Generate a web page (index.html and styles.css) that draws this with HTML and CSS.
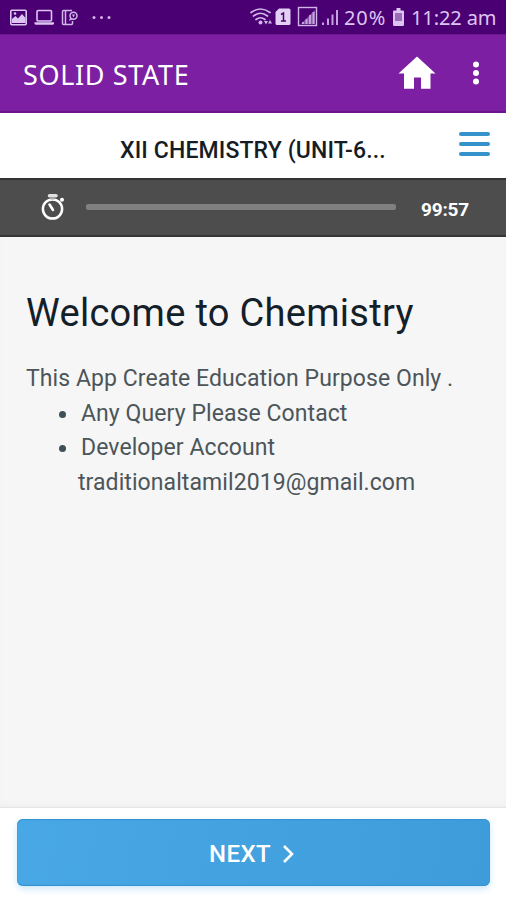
FILE: index.html
```html
<!DOCTYPE html>
<html lang="en">
<head>
<meta charset="utf-8">
<title>Solid State</title>
<link rel="stylesheet" href="styles.css">
</head>
<body>
<div class="status">
  <svg class="status-left" width="130" height="34" viewBox="0 0 130 34">
    <rect x="10.8" y="10.3" width="15.4" height="14.4" rx="1" fill="none" stroke="#dcc5f2" stroke-width="1.6"/>
    <path d="M12 23v-4l3.500-3 2.500 2.500 4-4.500 3.500 4v5z" fill="#dcc5f2"/><circle cx="15" cy="13.500" r="1.300" fill="#dcc5f2"/>
    <rect x="37" y="10.500" width="14.500" height="10.500" rx="1" fill="none" stroke="#dcc5f2" stroke-width="1.600"/>
    <path d="M34.500 22.300h19.500v1q0 1.500-1.500 1.500H36q-1.500 0-1.500-1.500z" fill="#dcc5f2"/>
    <path d="M72 10.500h-8.500q-1 0-1 1v12q0 1 1 1h8q1 0 1-1V21M65.500 10.500v14" fill="none" stroke="#d0b5e8" stroke-width="1.500"/>
    <circle cx="73.500" cy="15.800" r="3.500" fill="none" stroke="#d0b5e8" stroke-width="1.500"/><path d="M72 14.500h3l-1.500 3zM70 18l-1 3 4-2z" fill="#d0b5e8"/>
    <g fill="#d0b5e8"><circle cx="94" cy="17.500" r="1.500"/><circle cx="101.500" cy="17.500" r="1.500"/><circle cx="109" cy="17.500" r="1.500"/></g>
  </svg>
  <div class="status-right">
    <svg width="92" height="34" viewBox="248 0 92 34">
      <g fill="none" stroke="#d0b5e8" stroke-width="1.700" stroke-linecap="round"><path d="M251 12.500q9.500-7 19 0M253.500 16q7-5.500 14 0M256 19.500q4.500-3.500 9 0"/></g>
      <circle cx="260.500" cy="22.500" r="2" fill="#d0b5e8"/><path d="M264 21h4l-2 3.500zM268 23.500h4l-2-3.500z" fill="#d0b5e8"/>
      <path d="M279 8.500h10q1.500 0 1.500 1.500v13.500q0 1.500-1.500 1.500h-12q-1.500 0-1.500-1.500V12z" fill="#e4d0f5"/>
      <path d="M281 14.500l2.500-1.500v8M281 21h5" fill="none" stroke="#46006f" stroke-width="1.500"/>
      <rect x="298.500" y="7.500" width="18" height="18" fill="none" stroke="#d0b5e8" stroke-width="1.400"/>
      <path d="M301 24l14-14v14z" fill="#8b57ad"/><path d="M303 22v2M306.500 19v5M310 15v9M313.500 12v12" stroke="#c9a9df" stroke-width="1.800"/>
      <path d="M323 22.500v2.500M328 18.500v6.500M332.500 14.500v10.500M337 10v15" stroke="#c5a2df" stroke-width="2"/>
    </svg>
    <span class="percent">20%</span>
    <svg class="battery" width="13" height="34" viewBox="0 0 13 34"><path d="M4.500 8h4v2.500H11q1 0 1 1V24.500q0 1.500-1 1.500H2q-1 0-1-1.500V11.500q0-1 1-1h2.500z" fill="#dcc5f2"/><path d="M3 13h7v8H3z" fill="#9a6cb8"/></svg>
    <span class="clock">11:22 am</span>
  </div>
</div>
<header class="appbar">
  <h1>SOLID STATE</h1>
  <svg class="home" width="38" height="34" viewBox="0 0 38 34"><path d="M19 .5L37.500 17.500H32.500V32.700H23V21.500H16V32.700H6V17.500H.5z" fill="#fff"/></svg>
  <svg class="dots" width="8" height="24" viewBox="0 0 8 24"><g fill="#fff"><circle cx="4" cy="3.500" r="3"/><circle cx="4" cy="12" r="3"/><circle cx="4" cy="20.500" r="3"/></g></svg>
</header>
<div class="unit">
  <h2>XII CHEMISTRY (UNIT-6...</h2>
  <div class="menu"><i></i><i></i><i></i></div>
</div>
<div class="timer">
  <svg class="stopwatch" width="26" height="28" viewBox="0 0 26 28"><circle cx="12.500" cy="16" r="9.600" fill="none" stroke="#fff" stroke-width="2.500"/><path d="M9.500 2.800h6.500" stroke="#e2e2e2" stroke-width="3.500" stroke-linecap="round"/><path d="M10.500 5.500h4" stroke="#aaa" stroke-width="2"/><circle cx="22" cy="6.700" r="2" fill="#fff"/><path d="M9.500 11.500l3.500 5.500" stroke="#fff" stroke-width="2.600" stroke-linecap="round"/></svg>
  <div class="track"></div>
  <span class="time">99:57</span>
</div>
<main>
  <h3>Welcome to Chemistry</h3>
  <p class="intro">This App Create Education Purpose Only .</p>
  <ul>
    <li class="query">Any Query Please Contact</li>
    <li class="account">Developer Account</li>
  </ul>
  <p class="mail">traditionaltamil2019@gmail.com</p>
</main>
<footer>
  <div class="next"><span>NEXT</span><svg width="12" height="20" viewBox="0 0 12 20"><path d="M2 2l8 8-8 8" fill="none" stroke="#fff" stroke-width="2.600"/></svg></div>
</footer>
</body>
</html>
```

FILE: styles.css
```css
* { box-sizing: border-box; margin: 0; padding: 0; }
body { width: 506px; height: 900px; overflow: hidden; display: flex; flex-direction: column; background: #f6f6f6; font-family: Roboto, sans-serif; }
svg { display: block; flex: none; }
h1, h2, h3, p, li, span { white-space: nowrap; }
.status { height: 34px; flex: none; display: flex; justify-content: space-between; background: #4a0072; color: #dcc5f2; font: 20px/36px "Noto Sans", sans-serif; }
.status-right { display: flex; padding-right: 10px; }
.percent { width: 44px; margin-left: 4px; letter-spacing: 0.9px; }
.battery { margin: 0 6px 0 4px; }
.clock { width: 85px; letter-spacing: -0.1px; }
.appbar { height: 79px; flex: none; display: flex; align-items: flex-start; background: #7c1fa2; color: #fff; border-top: 1px solid #6d168f; border-bottom: 2px solid #6b168c; padding-left: 23px; }
.appbar h1 { flex: 1; font: 400 27px/79px "Noto Sans", sans-serif; letter-spacing: 0.65px; }
.home { margin: 21px 36px 0 0; }
.dots { margin: 26px 26px 0 0; }
.unit { height: 65px; flex: none; display: flex; background: #fff; padding: 0 16px 0 120px; color: #161c24; }
.unit h2 { flex: 1; font-size: 23px; font-weight: 500; line-height: 75px; letter-spacing: 0.13px; }
.menu { width: 31px; display: flex; flex-direction: column; gap: 6px; padding-top: 19px; }
.menu i { height: 4px; border-radius: 2px; background: #3592cb; }
.timer { height: 59px; flex: none; display: flex; background: #4d4d4d; border-top: 2px solid #333; border-bottom: 2px solid #353535; padding-left: 40px; }
.stopwatch { margin: 13px 20px 0 0; }
.track { width: 310px; height: 6px; margin-top: 24px; border-radius: 2px; background: #808080; }
.time { margin-left: 25px; font-size: 19px; font-weight: 700; line-height: 60px; letter-spacing: -0.2px; color: #fff; }
main { flex: 1; padding: 47px 26px 0; border-bottom: 1px solid #e5e5e5; color: #4c5559; font-size: 23px; line-height: 34.700px; letter-spacing: 0.08px; box-shadow: inset 0 -5px 8px -6px #e6e6e6; }
main h3 { font-size: 38px; font-weight: 400; line-height: 58px; letter-spacing: 0.3px; color: #13202a; margin-bottom: 20px; }
ul { list-style: none; }
li { display: flex; align-items: center; padding-left: 33px; }
li::before { content: ""; width: 7px; height: 7px; margin-right: 15px; border-radius: 50%; background: #405058; }
.mail { padding-left: 52px; }
footer { height: 92px; flex: none; background: #fff; padding: 11px 16px 0 17px; }
.next { height: 67px; display: flex; align-items: center; justify-content: center; gap: 11px; padding: 2px 4px 0 0; border-radius: 6px; background: linear-gradient(100deg, #48a7e5, #3e9cdb); box-shadow: inset 0 1px 1px #3393cf, inset 0 -1px 1px #3691cb, 0 3px 7px #cce8fb; color: #fff; font-size: 24px; font-weight: 500; letter-spacing: 0.4px; }
```
